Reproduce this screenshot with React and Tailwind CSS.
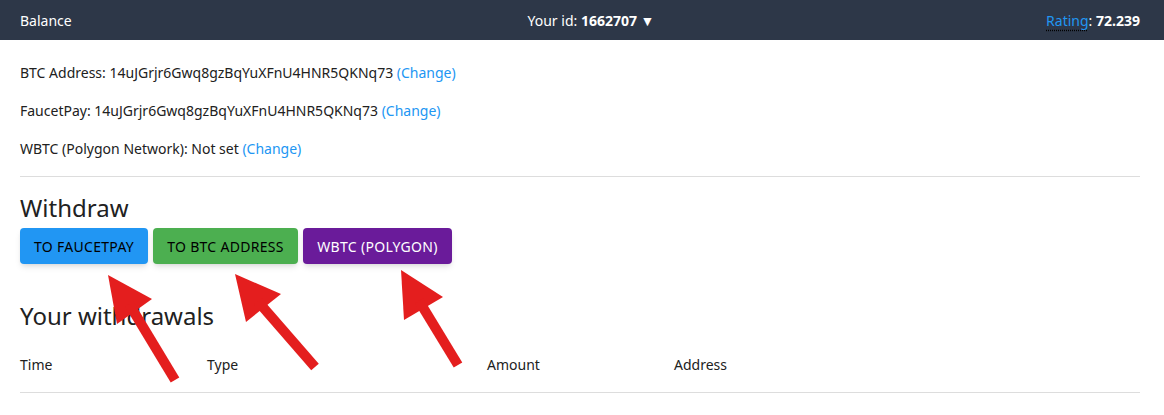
import React from "react";

const font = { fontFamily: '"Noto Sans", "Open Sans", sans-serif' };

function Arrows() {
  // red annotation arrows over the page
  const arrows = [
    { tip: [108, 275], r: [152, 299], b: [117, 324], end: [175, 380] },
    { tip: [235, 274], r: [281, 294], b: [246, 322], end: [315, 367] },
    { tip: [401, 270], r: [443, 297], b: [404, 320], end: [458, 365] },
  ];
  return (
    <svg className="absolute left-0 top-0 pointer-events-none" width="1164" height="415">
      {arrows.map((a, i) => {
        const mx = (a.r[0] + a.b[0]) / 2;
        const my = (a.r[1] + a.b[1]) / 2;
        return (
          <g key={i} fill="#e41e1e" stroke="#e41e1e">
            <polygon points={`${a.tip.join(",")} ${a.r.join(",")} ${a.b.join(",")}`} stroke="none" />
            <line x1={mx - (mx - a.tip[0]) * 0.2} y1={my - (my - a.tip[1]) * 0.2} x2={a.end[0]} y2={a.end[1]} strokeWidth="10" />
          </g>
        );
      })}
    </svg>
  );
}

export default function App() {
  return (
    <div className="relative w-full h-[415px] bg-white text-[#212121] overflow-hidden" style={font}>
      {/* Top bar */}
      <div className="h-10 bg-[#2d3748] text-white text-[14px] grid grid-cols-[1fr_auto_1fr] items-center pl-5 pr-6">
        <span>Balance</span>
        <span className="pl-[22px]">
          Your id: <b>1662707</b> ▼
        </span>
        <span className="text-right">
          <span className="text-[#2196f3] underline decoration-dotted decoration-black underline-offset-4">Rating</span>
          : <b>72.239</b>
        </span>
      </div>

      <div className="pl-5 pr-6 text-[14px]">
        <div className="pt-[23px] flex flex-col gap-[18px] leading-5">
          <p>
            BTC Address: 14uJGrjr6Gwq8gzBqYuXFnU4HNR5QKNq73{" "}
            <a className="text-[#2196f3]">(Change)</a>
          </p>
          <p>
            FaucetPay: 14uJGrjr6Gwq8gzBqYuXFnU4HNR5QKNq73{" "}
            <a className="text-[#2196f3]">(Change)</a>
          </p>
          <p>
            WBTC (Polygon Network): Not set{" "}
            <a className="text-[#2196f3]">(Change)</a>
          </p>
        </div>

        <hr className="mt-[17px] border-0 h-px bg-[#dddddd]" />

        <h2 className="mt-[16px] text-[24px] leading-[30px]">Withdraw</h2>
        <div className="mt-[5px] flex gap-[5px]">
          <button className="h-9 w-[128px] rounded-sm bg-[#2196f3] text-black uppercase tracking-[0.3px] shadow-md">
            To FaucetPay
          </button>
          <button className="h-9 w-[145px] rounded-sm bg-[#4caf50] text-black uppercase tracking-[0.3px] shadow-md">
            To BTC Address
          </button>
          <button className="h-9 w-[149px] rounded-sm bg-[#6a1b9a] text-white uppercase tracking-[0.3px] shadow-md">
            WBTC (Polygon)
          </button>
        </div>

        <h2 className="mt-[37px] text-[24px] leading-[30px]">Your withdrawals</h2>
        <table className="mt-[7px] w-full text-left">
          <thead>
            <tr className="border-b border-[#dddddd]">
              <th className="h-[54px] w-[187px] font-normal">Time</th>
              <th className="h-[54px] w-[280px] font-normal">Type</th>
              <th className="h-[54px] w-[187px] font-normal">Amount</th>
              <th className="h-[54px] font-normal">Address</th>
            </tr>
          </thead>
        </table>
      </div>

      <Arrows />
    </div>
  );
}
